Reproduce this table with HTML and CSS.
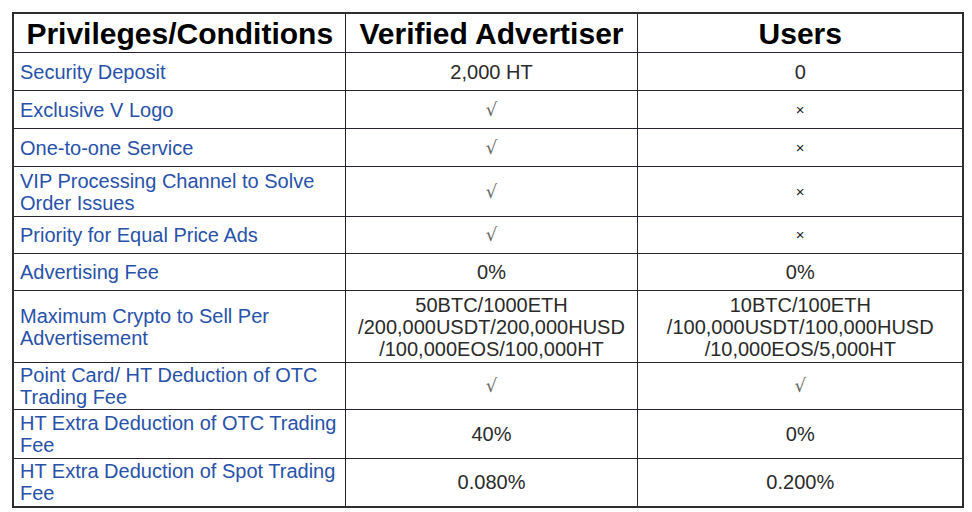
FILE: index.html
```html
<!DOCTYPE html>
<html>
<head>
<meta charset="utf-8">
<link rel="stylesheet" href="styles.css">
</head>
<body>
<table class="priv">
  <colgroup>
    <col class="c1"><col class="c2"><col class="c3">
  </colgroup>
  <thead>
    <tr class="head"><th>Privileges/Conditions</th><th>Verified Advertiser</th><th>Users</th></tr>
  </thead>
  <tbody>
    <tr class="r38"><td class="lbl">Security Deposit</td><td>2,000 HT</td><td>0</td></tr>
    <tr class="r38"><td class="lbl">Exclusive V Logo</td><td class="chk">√</td><td class="x">×</td></tr>
    <tr class="r38"><td class="lbl">One-to-one Service</td><td class="chk">√</td><td class="x">×</td></tr>
    <tr class="r50"><td class="lbl">VIP Processing Channel to Solve Order Issues</td><td class="chk">√</td><td class="x">×</td></tr>
    <tr class="r37"><td class="lbl">Priority for Equal Price Ads</td><td class="chk">√</td><td class="x">×</td></tr>
    <tr class="r37"><td class="lbl">Advertising Fee</td><td>0%</td><td>0%</td></tr>
    <tr class="r72"><td class="lbl">Maximum Crypto to Sell Per Advertisement</td><td>50BTC/1000ETH<br>/200,000USDT/200,000HUSD<br>/100,000EOS/100,000HT</td><td>10BTC/100ETH<br>/100,000USDT/100,000HUSD<br>/10,000EOS/5,000HT</td></tr>
    <tr class="r47"><td class="lbl">Point Card/ HT Deduction of OTC Trading Fee</td><td class="chk">√</td><td class="chk">√</td></tr>
    <tr class="r49"><td class="lbl">HT Extra Deduction of OTC Trading Fee</td><td>40%</td><td>0%</td></tr>
    <tr class="r48"><td class="lbl">HT Extra Deduction of Spot Trading Fee</td><td>0.080%</td><td>0.200%</td></tr>
  </tbody>
</table>
</body>
</html>
```

FILE: styles.css
```css
html, body {
  margin: 0;
  padding: 0;
  background: #ffffff;
}
body {
  padding: 12px 0 0 12px;
  font-family: "Liberation Sans", Arial, sans-serif;
}
.priv {
  border-collapse: collapse;
  table-layout: fixed;
  width: 950px;
  border: 2px solid #2e2e2e;
}
.c1 { width: 332px; }
.c2 { width: 292px; }
.c3 { width: 326px; }
.priv th, .priv td {
  border: 1px solid #2a2230;
  padding: 0 5px 0 6px;
  text-align: center;
  vertical-align: middle;
  font-size: 20px;
  line-height: 22px;
  color: #2a2a2a;
}
.priv th {
  font-size: 30px;
  font-weight: bold;
  color: #000000;
  height: 36px;
  line-height: 32px;
  padding-top: 2px;
  padding-bottom: 0;
}
.priv td.lbl {
  text-align: left;
  color: #2852aa;
}
.priv td.chk {
  font-family: "DejaVu Serif", "Liberation Serif", serif;
  font-size: 18px;
  color: #666666;
}
.priv td.x {
  font-size: 15px;
  color: #222222;
}
.r38 { height: 38px; }
.r37 { height: 37px; }
.r50 { height: 50px; }
.r72 { height: 72px; }
.r47 { height: 47px; }
.r49 { height: 49px; }
.r48 { height: 48px; }
```
